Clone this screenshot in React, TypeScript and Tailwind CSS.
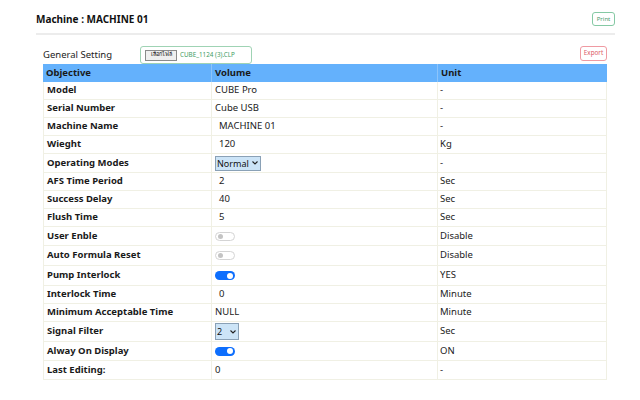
import React from "react";

type Row = {
  label: string;
  kind: "text" | "input" | "select" | "toggle";
  value?: string;
  on?: boolean;
  unit: string;
  h: string;
};

const rows: Row[] = [
  { label: "Model", kind: "text", value: "CUBE Pro", unit: "-", h: "h-[18px]" },
  { label: "Serial Number", kind: "text", value: "Cube USB", unit: "-", h: "h-[18px]" },
  { label: "Machine Name", kind: "input", value: "MACHINE 01", unit: "-", h: "h-[18px]" },
  { label: "Wieght", kind: "input", value: "120", unit: "Kg", h: "h-[18px]" },
  { label: "Operating Modes", kind: "select", value: "Normal", unit: "-", h: "h-[19px]" },
  { label: "AFS Time Period", kind: "input", value: "2", unit: "Sec", h: "h-[18px]" },
  { label: "Success Delay", kind: "input", value: "40", unit: "Sec", h: "h-[18px]" },
  { label: "Flush Time", kind: "input", value: "5", unit: "Sec", h: "h-[18px]" },
  { label: "User Enble", kind: "toggle", on: false, unit: "Disable", h: "h-[19px]" },
  { label: "Auto Formula Reset", kind: "toggle", on: false, unit: "Disable", h: "h-[20px]" },
  { label: "Pump Interlock", kind: "toggle", on: true, unit: "YES", h: "h-[20px]" },
  { label: "Interlock Time", kind: "input", value: "0", unit: "Minute", h: "h-[18px]" },
  { label: "Minimum Acceptable Time", kind: "text", value: "NULL", unit: "Minute", h: "h-[18px]" },
  { label: "Signal Filter", kind: "select", value: "2", unit: "Sec", h: "h-[20px]" },
  { label: "Alway On Display", kind: "toggle", on: true, unit: "ON", h: "h-[19px]" },
  { label: "Last Editing:", kind: "text", value: "0", unit: "-", h: "h-[19px]" },
];

function Toggle({ on }: { on?: boolean }) {
  return on ? (
    <span className="flex items-center justify-end w-[20px] h-[9px] rounded-full bg-[#0d6efd] px-[2px]">
      <span className="w-[6px] h-[6px] rounded-full bg-white" />
    </span>
  ) : (
    <span className="flex items-center w-[20px] h-[9px] rounded-full border border-[#d4d4d4] bg-white px-[2px]">
      <span className="w-[5px] h-[5px] rounded-full bg-[#c4c4c4]" />
    </span>
  );
}

function ValueCell({ row }: { row: Row }) {
  if (row.kind === "toggle") return <Toggle on={row.on} />;
  if (row.kind === "select") {
    const wide = row.value === "Normal";
    return (
      <span
        className={
          "flex items-center justify-between border border-[#8aa1b6] bg-[#cce4f7] pl-[1px] pr-[2px] text-[9px] leading-none text-[#111] " +
          (wide ? "w-[46px] h-[15px]" : "w-[24px] h-[17px]")
        }
      >
        <span>{row.value}</span>
        <svg width="6" height="4" viewBox="0 0 6 4" className="shrink-0">
          <path d="M0.5 0.5 L3 3 L5.5 0.5" fill="none" stroke="#222" strokeWidth="1.1" />
        </svg>
      </span>
    );
  }
  if (row.kind === "input") return <span className="pl-[4px]">{row.value}</span>;
  return <span>{row.value}</span>;
}

export default function App() {
  return (
    <div
      className="w-[640px] h-[400px] bg-white text-[#212529] overflow-hidden"
      style={{ fontFamily: "'Noto Sans', 'Open Sans', sans-serif" }}
    >
      <div className="pl-[36px] pr-[25px] pt-[12px]">
        {/* Header */}
        <div className="flex items-center justify-between h-[14px]">
          <h1 className="text-[10px] font-bold leading-none text-[#111]">Machine : MACHINE 01</h1>
          <button className="h-[14px] w-[23px] rounded-[3px] border border-[#85c9a4] text-[6px] text-[#4a9a6c] leading-none">
            Print
          </button>
        </div>
        <div className="mt-[7px] h-[2px] bg-[#ececec]" />

        {/* General Setting */}
        <div className="ml-[7px] mr-[8px]">
          <div className="flex items-start justify-between mt-[11px] h-[18px]">
            <div className="flex items-start">
              <span className="text-[9.5px] leading-none mt-[4px] text-[#222] w-[97px]">General Setting</span>
              <div className="flex items-center gap-[3px] w-[112px] h-[18px] rounded-[3px] border border-[#9fd3b4] px-[4px]">
                <span className="flex items-center justify-center w-[32px] h-[11px] border border-[#8a8a8a] bg-[#efefef] text-[5.5px] leading-none text-[#111]">
                  เลือกไฟล์
                </span>
                <span className="text-[6.3px] text-[#3d9c63] leading-none">CUBE_1124 (3).CLP</span>
              </div>
            </div>
            <button className="h-[15px] w-[27px] rounded-[3px] border border-[#ef9aa2] text-[6.3px] text-[#dc5a66] leading-none">
              Export
            </button>
          </div>

          <div className="w-[564px] text-[9.5px]">
            <div className="flex h-[18px] bg-[#64b1fc] font-bold text-[#1a1a1a]">
              <div className="w-[169px] flex items-center pl-[3px] border-r border-[#8cc4fb]">Objective</div>
              <div className="w-[226px] flex items-center pl-[3px] border-r border-[#8cc4fb]">Volume</div>
              <div className="flex-1 flex items-center pl-[3px]">Unit</div>
            </div>
            {rows.map((r) => (
              <div key={r.label} className={"flex border-b border-l border-r border-[#f0f0e4] " + r.h}>
                <div className="w-[168px] flex items-center pl-[3px] font-bold text-[#1a1a1a] border-r border-[#f0f0e4]">
                  {r.label}
                </div>
                <div className="w-[226px] flex items-center pl-[3px] text-[#222] border-r border-[#f0f0e4]">
                  <ValueCell row={r} />
                </div>
                <div className="flex-1 flex items-center pl-[2px] text-[#222]">{r.unit}</div>
              </div>
            ))}
          </div>
        </div>
      </div>
    </div>
  );
}
